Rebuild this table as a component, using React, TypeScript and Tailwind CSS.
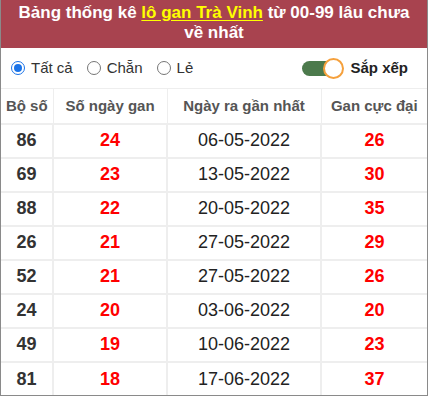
import { useState } from "react";

const rows = [
  { so: "86", gan: 24, ngay: "06-05-2022", max: 26 },
  { so: "69", gan: 23, ngay: "13-05-2022", max: 30 },
  { so: "88", gan: 22, ngay: "20-05-2022", max: 35 },
  { so: "26", gan: 21, ngay: "27-05-2022", max: 29 },
  { so: "52", gan: 21, ngay: "27-05-2022", max: 26 },
  { so: "24", gan: 20, ngay: "03-06-2022", max: 20 },
  { so: "49", gan: 19, ngay: "10-06-2022", max: 23 },
  { so: "81", gan: 18, ngay: "17-06-2022", max: 37 },
];

export default function App() {
  const [filter, setFilter] = useState("all");
  const [sorted, setSorted] = useState(true);

  return (
    <div className="w-[428px] h-[396px] border border-t-0 border-[#8a8a8a] bg-white font-['Liberation_Sans',Arial,sans-serif] overflow-hidden">
      {/* Title */}
      <div className="h-[48px] bg-[#a8434f] text-white font-bold text-[17px] leading-[20px] text-center pt-[3px] px-3">
        Bảng thống kê{" "}
        <span className="text-[#ffff00] underline underline-offset-2">lô gan Trà Vinh</span> từ 00-99 lâu chưa về nhất
      </div>

      {/* Filters */}
      <div className="h-[40px] flex items-center pl-[10px] pr-[19px] text-[15px] text-[#333]">
        {[
          { id: "all", label: "Tất cả" },
          { id: "even", label: "Chẵn" },
          { id: "odd", label: "Lẻ" },
        ].map((r) => (
          <label key={r.id} className="flex items-center mr-[14px] cursor-pointer">
            <span
              onClick={() => setFilter(r.id)}
              className={`w-[14px] h-[14px] rounded-full border flex items-center justify-center mr-[6px] ${
                filter === r.id ? "border-[#1a73e8]" : "border-[#767676]"
              }`}
            >
              {filter === r.id && <span className="w-[8px] h-[8px] rounded-full bg-[#1a73e8]" />}
            </span>
            {r.label}
          </label>
        ))}
        <div className="ml-auto flex items-center gap-[6px]">
          <button
            onClick={() => setSorted(!sorted)}
            className="relative w-[42px] h-[21px] flex items-center"
          >
            <span className="w-[32px] h-[15px] rounded-full bg-[#4c7a4c]" />
            <span
              className={`absolute top-0 w-[21px] h-[21px] rounded-full bg-white border-2 border-[#f5a03c] ${
                sorted ? "left-[21px]" : "left-0"
              }`}
            />
          </button>
          <span className="font-bold text-[15px] text-[#222]">Sắp xếp</span>
        </div>
      </div>

      {/* Table */}
      <table className="w-full border-collapse">
        <thead>
          <tr className="h-[35px] border-t border-b-2 border-[#eee] text-[15px] font-bold text-[#555]">
            <th className="w-[52px] font-bold">Bộ số</th>
            <th className="w-[114px] border-l border-[#eee] font-bold">Số ngày gan</th>
            <th className="w-[154px] border-l border-[#eee] font-bold">Ngày ra gần nhất</th>
            <th className="border-l border-[#eee] font-bold">Gan cực đại</th>
          </tr>
        </thead>
        <tbody>
          {rows.map((r, i) => (
            <tr key={i} className="h-[34px] border-b-2 border-[#eee] last:border-b-0 text-[18px] text-center">
              <td className="font-bold text-[#333]">{r.so}</td>
              <td className="border-l-2 border-[#eee] font-bold text-[#ff0000]">{r.gan}</td>
              <td className="border-l-2 border-[#eee] text-[#222]">{r.ngay}</td>
              <td className="border-l-2 border-[#eee] font-bold text-[#ff0000]">{r.max}</td>
            </tr>
          ))}
        </tbody>
      </table>
    </div>
  );
}
